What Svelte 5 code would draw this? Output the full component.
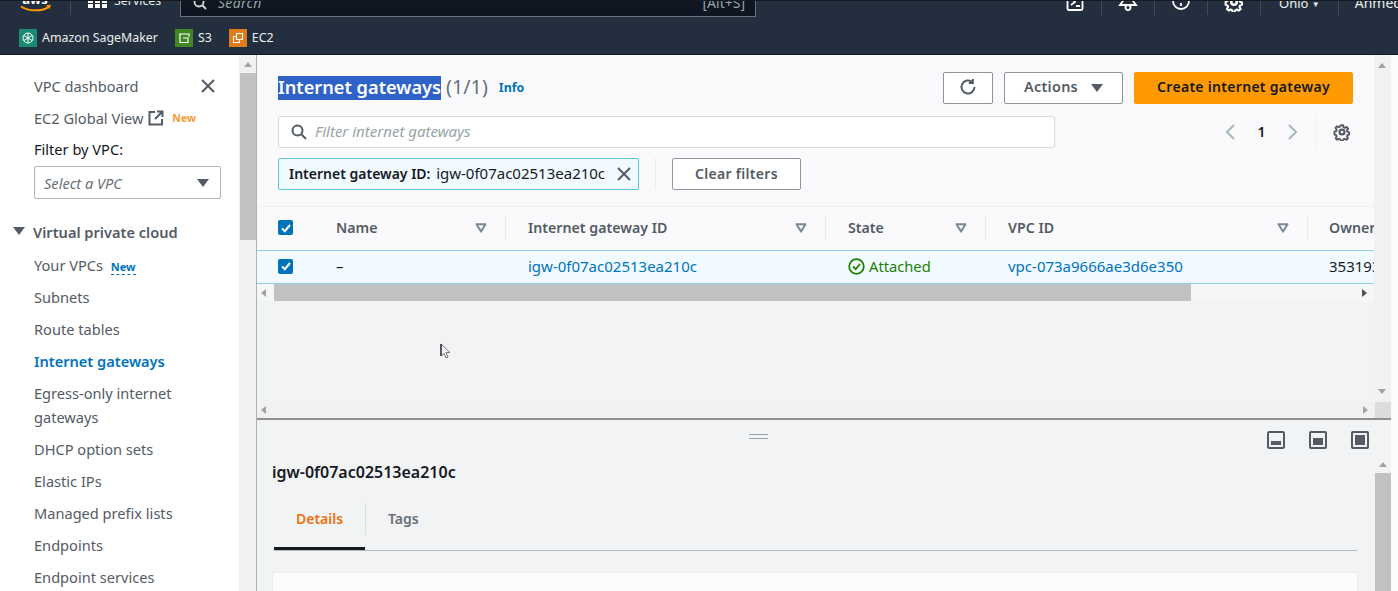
<script lang="ts">
	const sideLinks = [
		{ label: 'Your VPCs', isNew: true },
		{ label: 'Subnets' },
		{ label: 'Route tables' },
		{ label: 'Internet gateways', active: true },
		{ label: 'Egress-only internet gateways' },
		{ label: 'DHCP option sets' },
		{ label: 'Elastic IPs' },
		{ label: 'Managed prefix lists' },
		{ label: 'Endpoints' },
		{ label: 'Endpoint services' }
	];

	const columns = ['Name', 'Internet gateway ID', 'State', 'VPC ID'];
	const igwId = 'igw-0f07ac02513ea210c';
</script>

{#snippet sortIcon()}
	<svg class="sort" width="12" height="10" viewBox="0 0 12 10">
		<path d="M1.5 1.2h9L6 8.6z" fill="none" stroke="#7d8998" stroke-width="2" stroke-linejoin="round" />
	</svg>
{/snippet}

{#snippet checkbox()}
	<span class="check">
		<svg width="14" height="14" viewBox="0 0 14 14">
			<path d="M3 7.4l2.8 2.8L11 4" fill="none" stroke="#fff" stroke-width="2" />
		</svg>
	</span>
{/snippet}

{#snippet gear(size, color)}
	<svg width={size} height={size} viewBox="0 0 16 16" fill="none" stroke={color} stroke-width="2">
		<circle cx="8" cy="8" r="2.2" />
		<path d="M6.8 1h2.4l.4 2 1.5.7 1.8-1 1.5 1.8-1.2 1.6.4 1.6 1.9.7v2.2l-1.9.7-.4 1.4 1 1.8-1.6 1.6-1.8-1-1.5.6-.5 2H6.8l-.5-2-1.5-.6-1.8 1-1.6-1.6 1-1.8-.4-1.4-1.9-.7V7.700l1.900-.7.4-1.600-1.200-1.600L2.700 2l1.800 1 1.500-.7z" stroke-linejoin="round" transform="translate(1.200 1.200) scale(.85)" />
	</svg>
{/snippet}

<div class="page">
	<header class="nav">
		<div class="top-row">
			<div class="logo">
				<svg width="36" height="18" viewBox="0 0 36 18">
					<text x="17" y="3" text-anchor="middle" class="logo-text">aws</text>
					<path d="M3 5.500c8 5 20 5 27 .8" fill="none" stroke="#f90" stroke-width="2" />
					<path d="M28 4.200l5-.4-1.600 4.400z" fill="#f90" />
				</svg>
			</div>
			<span class="nav-sep first"></span>
			<div class="services">
				<span class="grid-icon">
					{#each Array(6) as _}<i></i>{/each}
				</span>
				<span>Services</span>
			</div>
			<div class="search">
				<svg width="14" height="14" viewBox="0 0 14 14" fill="none" stroke="#d5dbdb" stroke-width="1.800">
					<circle cx="6" cy="6" r="4.500" />
					<path d="M9.500 9.500L13 13" />
				</svg>
				<em>Search</em>
				<span class="shortcut">[Alt+S]</span>
			</div>
			<div class="nav-right">
				<svg class="ni" width="18" height="20" viewBox="0 0 18 20" fill="none" stroke="#fff" stroke-width="1.800">
					<rect x="1.500" y="1" width="15" height="17" rx="1.500" />
					<path d="M5 6l4 4-4 3M10 14h4" />
				</svg>
				<span class="nav-sep"></span>
				<svg class="ni wide" width="20" height="20" viewBox="0 0 20 20" fill="none" stroke="#fff" stroke-width="1.800">
					<path d="M5 2v7l-3 4h16l-3-4V2" />
					<circle cx="10" cy="15.500" r="2.500" />
				</svg>
				<span class="nav-sep"></span>
				<svg class="ni wide" width="20" height="20" viewBox="0 0 20 20" fill="none" stroke="#fff" stroke-width="1.800">
					<circle cx="10" cy="9" r="8" />
					<path d="M10 11v3M10 5v3" />
				</svg>
				<span class="nav-sep"></span>
				<span class="ni wide">{@render gear(20, '#fff')}</span>
				<span class="nav-sep"></span>
				<span class="region">Ohio <small>▼</small></span>
				<span class="nav-sep"></span>
				<span class="account">Ahmed</span>
			</div>
		</div>
		<div class="favorites">
			<span class="fav">
				<span class="fav-icon sagemaker">
					<svg width="12" height="12" viewBox="0 0 12 12" fill="none" stroke="#fff" stroke-width="1">
						<circle cx="6" cy="6" r="5" />
						<path d="M6 1v10M2 3.500l8 5M10 3.500l-8 5" />
					</svg>
				</span>
				Amazon SageMaker
			</span>
			<span class="fav">
				<span class="fav-icon s3">
					<svg width="12" height="12" viewBox="0 0 12 12" fill="none" stroke="#fff" stroke-width="1.200">
						<path d="M1 2h10v2.500M2 2v8.500h8V7M5 6h6" />
					</svg>
				</span>
				S3
			</span>
			<span class="fav">
				<span class="fav-icon ec2">
					<svg width="12" height="12" viewBox="0 0 12 12" fill="none" stroke="#fff" stroke-width="1.100">
						<rect x="4.500" y="1.500" width="6" height="6" />
						<path d="M4.500 4.500h-3v6h6v-3" />
					</svg>
				</span>
				EC2
			</span>
		</div>
	</header>

	<div class="body">
		<aside class="sidebar">
			<div class="side-head">
				<span>VPC dashboard</span>
				<svg width="16" height="16" viewBox="0 0 16 16" stroke="#545b64" stroke-width="2">
					<path d="M2 2l12 12M14 2L2 14" />
				</svg>
			</div>
			<div class="side-link global">
				<span>EC2 Global View</span>
				<svg width="16" height="16" viewBox="0 0 16 16" fill="none" stroke="#545b64" stroke-width="2">
					<path d="M7 2H1.500v12.500H14V9M9 1.500h5.500V7M14 2L7 9" />
				</svg>
				<span class="new orange">New</span>
			</div>
			<div class="filter-label">Filter by VPC:</div>
			<div class="select">
				<em>Select a VPC</em>
				<span class="caret"></span>
			</div>
			<div class="section">
				<span class="caret"></span>
				<span>Virtual private cloud</span>
			</div>
			<ul>
				{#each sideLinks as link}
					<li class:active={link.active}>
						{link.label}
						{#if link.isNew}<span class="new blue">New</span>{/if}
					</li>
				{/each}
			</ul>
		</aside>
		<div class="side-scroll">
			<span class="arrow up"></span>
			<span class="thumb"></span>
		</div>

		<main class="main">
			<section class="upper">
				<div class="upper-row">
					<div class="content">
						<div class="head-area">
							<div class="title-row">
								<h1><mark>Internet gateways</mark></h1>
								<span class="count">(1/1)</span>
								<span class="info">Info</span>
								<div class="actions">
									<button class="btn refresh" aria-label="Refresh">
										<svg width="18" height="18" viewBox="0 0 18 18" fill="none" stroke="#545b64" stroke-width="2">
											<path d="M15.500 9a6.500 6.500 0 1 1-2.200-4.900" />
											<path d="M13.800 1v4h-4" />
										</svg>
									</button>
									<button class="btn action">Actions <span class="caret"></span></button>
									<button class="btn primary">Create internet gateway</button>
								</div>
							</div>
							<div class="filter-row">
								<div class="filter-input">
									<svg width="16" height="16" viewBox="0 0 16 16" fill="none" stroke="#545b64" stroke-width="2">
										<circle cx="6.500" cy="6.500" r="5" />
										<path d="M10.500 10.500L15 15" />
									</svg>
									<em>Filter internet gateways</em>
								</div>
								<div class="pager">
									<svg width="12" height="16" viewBox="0 0 12 16" fill="none" stroke="#aab7b8" stroke-width="2"><path d="M10 1L3 8l7 7" /></svg>
									<b>1</b>
									<svg width="12" height="16" viewBox="0 0 12 16" fill="none" stroke="#aab7b8" stroke-width="2"><path d="M2 1l7 7-7 7" /></svg>
									<span class="pager-sep"></span>
									{@render gear(18, '#545b64')}
								</div>
							</div>
							<div class="token-row">
								<div class="token">
									<span><b>Internet gateway ID:</b> <span class="value">{igwId}</span></span>
									<svg width="16" height="16" viewBox="0 0 16 16" stroke="#545b64" stroke-width="2">
										<path d="M2 2l12 12M14 2L2 14" />
									</svg>
								</div>
								<span class="token-sep"></span>
								<button class="btn clear">Clear filters</button>
							</div>
						</div>

						<div class="table">
							<div class="tr th">
								<div class="cb-cell">{@render checkbox()}</div>
								{#each columns as col}
									<div class="td"><span>{col}</span>{@render sortIcon()}</div>
								{/each}
								<div class="td last">Owner</div>
							</div>
							<div class="tr selected">
								<div class="cb-cell">{@render checkbox()}</div>
								<div class="td plain">–</div>
								<div class="td link">{igwId}</div>
								<div class="td ok">
									<svg width="17" height="17" viewBox="0 0 17 17" fill="none" stroke="#1d8102" stroke-width="1.800">
										<circle cx="8.500" cy="8.500" r="7.300" />
										<path d="M5 8.500l2.700 2.700L12 6" />
									</svg>
									Attached
								</div>
								<div class="td link">vpc-073a9666ae3d6e350</div>
								<div class="td last plain">353193482</div>
							</div>
							<div class="hbar table-bar">
								<span class="arrow left"></span>
								<span class="hthumb"></span>
								<span class="arrow right dark"></span>
							</div>
						</div>
					</div>
					<div class="v-track">
						<span class="arrow up"></span>
						<span class="arrow down"></span>
					</div>
				</div>
				<div class="outer-h">
					<div class="hbar">
						<span class="arrow left"></span>
						<span class="arrow right"></span>
					</div>
					<span class="corner"></span>
				</div>
			</section>

			<section class="lower">
				<div class="lower-content">
					<div class="lower-top">
						<span class="handle"></span>
						<div class="split-icons">
							<svg width="18" height="18" viewBox="0 0 18 18"><rect x="1" y="1" width="16" height="16" rx="1" fill="none" stroke="#545b64" stroke-width="2" /><rect x="4" y="10" width="10" height="4" fill="#545b64" /></svg>
							<svg width="18" height="18" viewBox="0 0 18 18"><rect x="1" y="1" width="16" height="16" rx="1" fill="none" stroke="#545b64" stroke-width="2" /><rect x="4" y="7" width="10" height="7" fill="#545b64" /></svg>
							<svg width="18" height="18" viewBox="0 0 18 18"><rect x="1" y="1" width="16" height="16" rx="1" fill="none" stroke="#545b64" stroke-width="2" /><rect x="4" y="4" width="10" height="10" fill="#545b64" /></svg>
						</div>
					</div>
					<h2>{igwId}</h2>
					<div class="tabs">
						<span class="tab active">Details</span>
						<span class="tab-sep"></span>
						<span class="tab">Tags</span>
					</div>
					<div class="card"></div>
				</div>
				<div class="lower-scroll">
					<span class="arrow up"></span>
					<span class="thumb"></span>
				</div>
			</section>
		</main>
	</div>

	<svg class="cursor" width="12" height="17" viewBox="0 0 12 17">
		<path d="M1 1v12l3-2.600 2 4.600 2-.9-2-4.500h4z" fill="#f6f6f8" stroke="#777" stroke-width="1" />
		<path d="M1 1v12" stroke="#16191f" stroke-width="1.200" />
	</svg>
</div>

<style>
	:global(body) {
		margin: 0;
		overflow: hidden;
	}

	.page {
		position: relative;
		width: 1398px;
		height: 591px;
		overflow: hidden;
		font-family: 'Noto Sans', 'Open Sans', sans-serif;
		font-size: 14px;
		color: #545b64;
		background: #fff;
		display: flex;
		flex-direction: column;
	}

	button {
		font-family: inherit;
	}

	/* top nav */
	.nav {
		height: 55px;
		flex: none;
		background: #232f3e;
		border-top: 1px solid #16191f;
		box-sizing: border-box;
		border-bottom: 1px solid #16191f;
		color: #fff;
	}

	.top-row {
		height: 17px;
		display: flex;
		align-items: flex-end;
		overflow: hidden;
	}

	.logo {
		margin-left: 18px;
		height: 17px;
		width: 36px;
	}

	.logo svg {
		display: block;
	}

	.logo-text {
		font: 700 13px 'Noto Sans', sans-serif;
		fill: #fff;
	}

	.nav-sep {
		width: 1px;
		height: 14px;
		margin-bottom: 3px;
		background: #414d5c;
		flex: none;
	}

	.nav-sep.first {
		margin-left: 16px;
	}

	.services {
		display: flex;
		align-items: center;
		gap: 7px;
		margin: 0 0 8px 17px;
		width: 92px;
		height: 20px;
		font-size: 12.4px;
		color: #eaeded;
	}

	.grid-icon {
		display: grid;
		grid-template-columns: repeat(3, 5px);
		gap: 1px 2px;
		transform: translateY(3px);
	}

	.grid-icon i {
		width: 5px;
		height: 4px;
		background: #fff;
	}

	.search {
		width: 576px;
		height: 30px;
		box-sizing: border-box;
		flex: none;
		display: flex;
		align-items: center;
		gap: 11px;
		padding: 0 10px 0 12px;
		background: #0f1621;
		border: 1px solid #687078;
		border-top: 0;
		font-size: 14px;
		color: #95a5a6;
		margin-bottom: 1px;
	}

	.search > * {
		transform: translateY(1px);
	}

	.search em {
		letter-spacing: 0.3px;
	}

	.shortcut {
		margin-left: auto;
	}

	.nav-right {
		margin-left: auto;
		display: flex;
		align-items: flex-end;
		width: 349px;
		flex: none;
	}

	.ni {
		flex: none;
		margin: 0 17px 6px 17px;
		display: block;
		height: 20px;
	}

	.ni.wide {
		margin: 0 16px 6px 16px;
	}

	.region {
		margin: 0 18px 5px 18px;
		font-size: 13px;
		width: 44px;
		height: 20px;
		line-height: 20px;
		white-space: nowrap;
		color: #eaeded;
	}

	.region small {
		font-size: 8px;
		vertical-align: 1px;
	}

	.account {
		margin: 0 0 5px 16px;
		height: 20px;
		line-height: 20px;
		font-size: 14px;
		color: #eaeded;
	}

	.favorites {
		display: flex;
		align-items: center;
		height: 36px;
		box-sizing: border-box;
		padding: 3px 0 0 19px;
		gap: 17px;
		font-size: 12.4px;
		color: #eaeded;
	}

	.fav {
		display: flex;
		align-items: center;
		gap: 5px;
	}

	.fav-icon {
		width: 18px;
		height: 18px;
		display: flex;
		align-items: center;
		justify-content: center;
	}

	.sagemaker {
		background: #1b8a72;
	}

	.s3 {
		background: #3f8624;
	}

	.ec2 {
		background: #e07b1a;
	}

	/* layout */
	.body {
		flex: 1;
		min-height: 0;
		display: flex;
	}

	.sidebar {
		width: 239px;
		flex: none;
		box-sizing: border-box;
		padding: 19px 18px 0 34px;
		overflow: hidden;
		background: #fff;
		font-size: 14.6px;
		line-height: 24px;
	}

	.side-head {
		display: flex;
		justify-content: space-between;
		align-items: center;
		padding-right: 5px;
	}

	.side-link {
		margin-top: 8px;
	}

	.global {
		display: flex;
		align-items: center;
		gap: 5px;
	}

	.new {
		font-size: 10.5px;
		font-weight: 700;
		margin-left: 3px;
	}

	.orange {
		color: #f39c3a;
	}

	.blue {
		color: #0073bb;
		border-bottom: 1px dashed #0073bb;
		line-height: 14px;
		display: inline-block;
		margin-left: 4px;
		font-size: 11px;
	}

	.filter-label {
		margin-top: 7px;
		color: #16191f;
	}

	.select {
		margin-top: 5px;
		height: 33px;
		box-sizing: border-box;
		border: 1px solid #aab7b8;
		border-radius: 2px;
		display: flex;
		align-items: center;
		justify-content: space-between;
		padding: 0 11px 0 9px;
		color: #687078;
	}

	.caret {
		display: inline-block;
		width: 0;
		height: 0;
		border-left: 6px solid transparent;
		border-right: 6px solid transparent;
		border-top: 8px solid #545b64;
	}

	.section {
		display: flex;
		align-items: center;
		gap: 8px;
		margin: 20px 0 0 -21px;
		font-weight: 600;
	}

	.section span:last-child {
		transform: translateY(1px);
	}

	ul {
		list-style: none;
		margin: 10px 0 0;
		padding: 0;
	}

	li {
		margin-bottom: 8px;
	}

	li.active {
		color: #0073bb;
		font-weight: 600;
	}

	.side-scroll {
		width: 17px;
		flex: none;
		background: #f1f1f1;
		border-right: 1px solid #aeb2b5;
		display: flex;
		flex-direction: column;
		align-items: center;
		padding-top: 7px;
	}

	.side-scroll .thumb {
		width: 16px;
		height: 167px;
		margin-top: 6px;
		background: #c1c1c1;
	}

	.arrow {
		display: block;
		width: 0;
		height: 0;
		flex: none;
	}

	.arrow.up {
		border-left: 4px solid transparent;
		border-right: 4px solid transparent;
		border-bottom: 5px solid #a3a3a3;
	}

	.arrow.down {
		border-left: 4px solid transparent;
		border-right: 4px solid transparent;
		border-top: 5px solid #a3a3a3;
	}

	.arrow.left {
		border-top: 4px solid transparent;
		border-bottom: 4px solid transparent;
		border-right: 5px solid #a3a3a3;
	}

	.arrow.right {
		border-top: 4px solid transparent;
		border-bottom: 4px solid transparent;
		border-left: 5px solid #a3a3a3;
	}

	.arrow.right.dark {
		border-left-color: #505050;
	}

	.main {
		flex: 1;
		min-width: 0;
		display: flex;
		flex-direction: column;
		padding-right: 7px;
		background: #fbfbfb;
	}

	/* upper panel */
	.upper {
		height: 365px;
		flex: none;
		box-sizing: border-box;
		border-bottom: 2px solid #8d8f92;
		display: flex;
		flex-direction: column;
		background: #f2f3f5;
	}

	.upper-row {
		flex: 1;
		min-height: 0;
		display: flex;
	}

	.content {
		width: 1117px;
		flex: none;
		overflow: hidden;
	}

	.head-area {
		background: #fafafc;
		padding: 17px 21px 0 21px;
		height: 152px;
		box-sizing: border-box;
		border-bottom: 1px solid #f0f1f2;
	}

	.title-row {
		display: flex;
		align-items: center;
		height: 31px;
	}

	h1 {
		margin: 0;
		font-size: 18.2px;
		font-weight: 600;
		line-height: 24px;
	}

	mark {
		background: #2f62c9;
		color: #fff;
		display: block;
		padding: 0;
		height: 24px;
		line-height: 22px;
	}

	.count {
		font-size: 19.8px;
		margin-left: 5px;
		color: #687078;
		padding-bottom: 2px;
	}

	.info {
		font-size: 12.4px;
		font-weight: 700;
		color: #0073bb;
		margin-left: 11px;
	}

	.actions {
		margin-left: auto;
		display: flex;
		gap: 11px;
	}

	.btn {
		height: 32px;
		box-sizing: border-box;
		border: 1px solid #8d969e;
		border-radius: 2px;
		background: #fff;
		color: #545b64;
		font-size: 14px;
		font-weight: 600;
		letter-spacing: 0.3px;
		display: flex;
		align-items: center;
		justify-content: center;
		padding: 0 0 2px;
	}

	.refresh {
		width: 50px;
	}

	.action {
		width: 119px;
		gap: 13px;
		font-size: 14.4px;
	}

	.action .caret {
		margin-top: 2px;
	}

	.primary {
		width: 219px;
		background: #f90;
		border-color: #f90;
		color: #16191f;
	}

	.filter-row {
		display: flex;
		align-items: center;
		margin-top: 13px;
	}

	.filter-input {
		width: 777px;
		height: 32px;
		box-sizing: border-box;
		border: 1px solid #d5dbdb;
		border-radius: 2px;
		background: #fff;
		display: flex;
		align-items: center;
		gap: 8px;
		padding: 0 0 2px 12px;
		color: #95a5a6;
		font-size: 15px;
	}

	.filter-input svg {
		margin-top: 2px;
	}

	.pager {
		margin-left: auto;
		display: flex;
		align-items: center;
		padding-right: 2px;
	}

	.pager b {
		width: 51px;
		text-align: center;
		color: #16191f;
		font-weight: 600;
		padding-bottom: 2px;
	}

	.pager-sep {
		width: 1px;
		height: 32px;
		background: #f0f1f2;
		margin: 0 17px 0 16px;
	}

	.token-row {
		display: flex;
		align-items: center;
		margin-top: 10px;
	}

	.token {
		width: 361px;
		height: 32px;
		box-sizing: border-box;
		border: 1px solid #5cc4dc;
		border-radius: 2px;
		background: #f1faff;
		display: flex;
		align-items: center;
		justify-content: space-between;
		padding: 0 6px 2px 10px;
		color: #16191f;
		white-space: nowrap;
	}

	.token svg {
		margin-top: 2px;
	}

	.token b {
		font-weight: 600;
	}

	.value {
		font-size: 15px;
		margin-left: 2px;
	}

	.token-sep {
		width: 1px;
		height: 32px;
		margin: 0 16px;
		background: #eaeded;
	}

	.clear {
		width: 129px;
	}

	/* table */
	.table {
		background: #fafafc;
	}

	.tr {
		display: grid;
		grid-template-columns: 60px 189px 320px 160px 322px 100px;
		align-items: center;
		white-space: nowrap;
	}

	.th {
		height: 43px;
		padding-bottom: 2px;
		box-sizing: border-box;
		background: #fafafc;
		font-weight: 600;
		font-size: 14.2px;
		color: #545b64;
	}

	.selected {
		height: 34px;
		box-sizing: border-box;
		border-top: 1px solid #8fd0e2;
		border-bottom: 1px solid #8fd0e2;
		background: #f1faff;
		font-size: 15px;
		padding-bottom: 2px;
	}

	.cb-cell {
		padding-left: 21px;
		display: flex;
	}

	.check {
		width: 15px;
		height: 15px;
		border-radius: 2px;
		background: #0073bb;
		display: flex;
		align-items: center;
		justify-content: center;
	}

	.td {
		padding-left: 22px;
		padding-right: 18px;
		display: flex;
		align-items: center;
		justify-content: space-between;
		box-sizing: border-box;
		height: 100%;
	}

	.tr.th .td {
		height: 24px;
		border-right: 1px solid #eaeded;
	}

	.tr .td:nth-child(2) {
		padding-left: 19px;
	}

	.tr .td.last {
		border: 0;
		padding-left: 21px;
		padding-right: 0;
		justify-content: flex-start;
	}

	.plain {
		color: #16191f;
	}

	.link {
		color: #0073bb;
	}

	.ok {
		color: #1d8102;
		justify-content: flex-start;
		gap: 4px;
		font-size: 14.7px;
	}

	.ok svg {
		flex: none;
		margin-top: 1px;
	}

	.hbar {
		height: 17px;
		display: flex;
		align-items: center;
		justify-content: space-between;
		padding: 0 7px 0 4px;
		background: #f1f1f1;
		position: relative;
	}

	.table-bar {
		background: #f5f6f7;
	}

	.hthumb {
		position: absolute;
		left: 17px;
		top: 0;
		width: 917px;
		height: 17px;
		background: #c1c1c1;
	}

	.v-track {
		width: 16px;
		flex: none;
		display: flex;
		flex-direction: column;
		align-items: center;
		justify-content: space-between;
		padding: 8px 0;
		background: #f1f1f3;
	}

	.outer-h {
		display: flex;
		height: 16px;
		flex: none;
	}

	.outer-h .hbar {
		flex: 1;
		height: 16px;
	}

	.corner {
		width: 16px;
		background: #dcdcdc;
	}

	/* lower panel */
	.lower {
		flex: 1;
		min-height: 0;
		display: flex;
		overflow: hidden;
		background: #f2f3f5;
	}

	.lower-content {
		width: 1118px;
		flex: none;
		box-sizing: border-box;
		padding-left: 15px;
	}

	.lower-top {
		height: 37px;
		display: flex;
		align-items: center;
		position: relative;
		padding-right: 6px;
	}

	.handle {
		position: absolute;
		left: 477px;
		top: 14px;
		width: 19px;
		height: 3px;
		border-top: 1px solid #95a5a6;
		border-bottom: 1px solid #95a5a6;
	}

	.split-icons {
		margin-left: auto;
		display: flex;
		gap: 24px;
		margin-top: 3px;
	}

	h2 {
		margin: 3px 0 0;
		font-size: 16px;
		font-weight: 600;
		line-height: 24px;
		color: #16191f;
	}

	.tabs {
		margin: 16px 18px 0 2px;
		height: 51px;
		box-sizing: border-box;
		display: flex;
		align-items: flex-start;
		border-bottom: 1px solid #b5babe;
	}

	.tab {
		height: 50px;
		box-sizing: border-box;
		padding: 0 22px 14px;
		display: flex;
		align-items: center;
		font-weight: 600;
		color: #687078;
	}

	.tab.active {
		width: 91px;
		color: #ec7211;
		border-bottom: 3px solid #16191f;
		padding-bottom: 10px;
		justify-content: center;
	}

	.tab-sep {
		width: 1px;
		height: 32px;
		margin-top: 3px;
		background: #dcdfe1;
	}

	.card {
		margin: 21px 17px 0 0;
		height: 40px;
		background: #fbfbfd;
		border: 1px solid #eaeded;
		border-bottom: 0;
	}

	.lower-scroll {
		width: 16px;
		flex: none;
		margin-top: 36px;
		display: flex;
		flex-direction: column;
		align-items: center;
		padding-top: 6px;
	}

	.lower-scroll .thumb {
		width: 16px;
		height: 140px;
		margin-top: 6px;
		background: #c1c1c1;
	}

	.cursor {
		position: absolute;
		left: 440px;
		top: 343px;
	}
</style>
